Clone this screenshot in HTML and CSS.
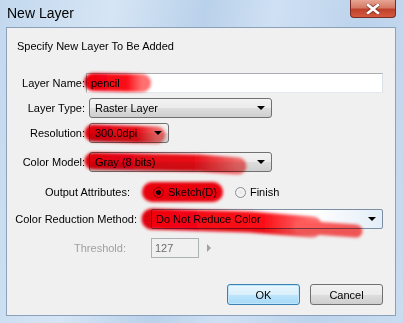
FILE: index.html
```html
<!DOCTYPE html>
<html lang="en">
<head>
    <meta charset="UTF-8">
    <title>New Layer</title>
    <link rel="stylesheet" href="styles.css">
</head>
<body>
    <div class="window">
        <div class="titlebar">
            <span class="title">New Layer</span>
            <button class="close" type="button">
                <svg width="14" height="10" viewBox="0 0 14 10"><path d="M2 1 L12 9 M12 1 L2 9" stroke="#5a1a14" stroke-width="4.5" stroke-linecap="square" opacity="0.5"/><path d="M2 1 L12 9 M12 1 L2 9" stroke="#fff" stroke-width="2.6" stroke-linecap="square"/></svg>
            </button>
        </div>
        <div class="client">
            <p class="intro">Specify New Layer To Be Added</p>

            <div class="row row-name">
                <label class="lbl lbl-short">Layer Name:</label>
                <input class="text" type="text" value="pencil">
            </div>
            <div class="row row-type">
                <label class="lbl lbl-short">Layer Type:</label>
                <div class="combo combo-wide">Raster Layer<span class="arrow"></span></div>
            </div>
            <div class="row row-res">
                <label class="lbl lbl-short">Resolution:</label>
                <div class="combo combo-small">300.0dpi<span class="arrow"></span></div>
            </div>
            <div class="row row-model">
                <label class="lbl lbl-short">Color Model:</label>
                <div class="combo combo-wide">Gray (8 bits)<span class="arrow"></span></div>
            </div>
            <div class="row row-output">
                <label class="lbl lbl-output">Output Attributes:</label>
                <span class="radio checked"></span><span class="radio-text">Sketch(D)</span>
                <span class="radio"></span><span class="radio-text">Finish</span>
            </div>
            <div class="row row-reduce">
                <label class="lbl lbl-long">Color Reduction Method:</label>
                <div class="combo combo-list">Do Not Reduce Color<span class="arrow"></span></div>
            </div>
            <div class="row row-thresh">
                <label class="lbl lbl-thresh disabled">Threshold:</label>
                <div class="spin">127</div>
                <span class="tri"></span>
            </div>

            <div class="actions">
                <button class="btn btn-default" type="button">OK</button>
                <button class="btn" type="button">Cancel</button>
            </div>
        </div>

        <!-- marker scribbles over the form -->
        <svg class="marks" width="403" height="323" viewBox="0 0 403 323">
            <defs>
                <filter id="soft" x="-20%" y="-50%" width="140%" height="200%">
                    <feGaussianBlur stdDeviation="1.6"/>
                </filter>
                <linearGradient id="fadeR" x1="0" y1="0" x2="1" y2="0">
                    <stop offset="0" stop-color="#f00010"/>
                    <stop offset="0.7" stop-color="#fa1018"/>
                    <stop offset="1" stop-color="#ff7070"/>
                </linearGradient>
            </defs>
            <g filter="url(#soft)" stroke-linecap="round" fill="none">
                <path d="M93 82 L142 83" stroke="url(#fadeR)" stroke-width="18"/>
                <path d="M93 133 L157 135" stroke="url(#fadeR)" stroke-width="17"/>
                <path d="M93 161 L200 163 L238 166" stroke="url(#fadeR)" stroke-width="17"/>
                <path d="M152 192 L213 192" stroke="#f8040c" stroke-width="20"/>
                <path d="M152 219 L250 222 L312 227" stroke="url(#fadeR)" stroke-width="21"/>
                <path d="M300 227 L356 231" stroke="#ff5a5a" stroke-width="13"/>
            </g>
        </svg>
    </div>
</body>
</html>
```

FILE: styles.css
```css
body {
    margin: 0;
    padding: 0;
    font-family: "Liberation Sans", Arial, sans-serif;
    font-size: 11px;
    color: #000;
}
.window {
    position: relative;
    width: 403px;
    height: 323px;
    box-sizing: border-box;
    padding: 0 7px 7px 6px;
    background: linear-gradient(100deg, #c3d8ee 0%, #d6e5f5 25%, #b9d1ea 45%, #cfe0f3 60%, #bcd3ec 80%, #c9dcf0 100%);
    display: flex;
    flex-direction: column;
}
.titlebar {
    height: 27px;
    display: flex;
    align-items: flex-start;
    justify-content: space-between;
}
.title {
    margin-top: 5px;
    margin-left: 1px;
    font-size: 14px;
    color: #000;
}
.close {
    width: 46px;
    height: 18px;
    margin-right: 0;
    padding: 0;
    border: 1px solid #7a2a23;
    border-top: none;
    border-radius: 0 0 4px 4px;
    background: linear-gradient(#e8a493 0%, #d47a66 45%, #c0412b 55%, #d25a3f 100%);
    display: flex;
    align-items: center;
    justify-content: center;
}
.client {
    flex: 1;
    position: relative;
    background: #f0f0f0;
    border: 1px solid #8ba1b9;
    padding: 0 12px 0 0;
}
.intro {
    margin: 11px 0 0 10px;
    line-height: 14px;
}
.row {
    display: flex;
    align-items: center;
    height: 20px;
}
.row-name { margin-top: 20px; }
.row-type { margin-top: 5px; }
.row-res { margin-top: 5px; }
.row-model { margin-top: 9px; }
.row-output { margin-top: 10px; }
.row-reduce { margin-top: 7px; }
.row-thresh { margin-top: 9px; }

.lbl {
    text-align: right;
    flex-shrink: 0;
    white-space: nowrap;
}
.lbl-short {
    width: 78px;
    margin-right: 4px;
}
.lbl-output {
    width: 123px;
    margin-right: 23px;
}
.lbl-long {
    width: 130px;
    margin-right: 14px;
}
.lbl-thresh {
    width: 119px;
    margin-right: 25px;
}
.disabled {
    color: #a0a0a0;
}
.text {
    flex: 1;
    height: 20px;
    box-sizing: border-box;
    margin-left: -3px;
    border: 1px solid #abadb3;
    border-bottom-color: #e3e9ef;
    border-right-color: #dbdfe6;
    background: #fff;
    padding: 0 4px;
    font: inherit;
    outline: none;
}
.combo {
    position: relative;
    height: 20px;
    box-sizing: border-box;
    border: 1px solid #707070;
    border-radius: 3px;
    background: linear-gradient(#f2f2f2 0%, #ebebeb 50%, #dddddd 51%, #cfcfcf 100%);
    padding: 0 0 0 5px;
    line-height: 18px;
}
.combo-wide { width: 183px; }
.combo-small { width: 80px; }
.combo-list {
    flex: 1;
    border-radius: 2px;
    border-color: #7d8fa3;
    background: linear-gradient(90deg, #ffffff 0%, #ffffff 70%, #e3eef8 100%);
    padding-left: 4px;
}
.arrow {
    position: absolute;
    right: 6px;
    top: 7px;
    width: 0;
    height: 0;
    border-left: 4px solid transparent;
    border-right: 4px solid transparent;
    border-top: 4px solid #000;
}
.radio {
    width: 11px;
    height: 11px;
    flex-shrink: 0;
    box-sizing: border-box;
    border-radius: 50%;
    border: 1px solid #8e8f8f;
    background: radial-gradient(circle, #e6e6e6 0%, #f6f6f6 60%, #d0d0d0 100%);
    margin-right: 4px;
}
.radio.checked {
    background: radial-gradient(circle, #111 0%, #222 35%, #f4f4f4 45%, #ddd 100%);
}
.radio-text {
    margin-right: 18px;
}
.spin {
    width: 48px;
    height: 20px;
    box-sizing: border-box;
    border: 1px solid #adb2b5;
    color: #6d6d6d;
    padding-left: 3px;
    line-height: 18px;
}
.tri {
    margin-left: 8px;
    width: 0;
    height: 0;
    border-top: 4px solid transparent;
    border-bottom: 4px solid transparent;
    border-left: 4px solid #a0a0a0;
}
.actions {
    display: flex;
    justify-content: flex-end;
    gap: 10px;
    margin-top: 26px;
}
.btn {
    width: 73px;
    height: 21px;
    box-sizing: border-box;
    border: 1px solid #707070;
    border-radius: 3px;
    background: linear-gradient(#f2f2f2 0%, #ebebeb 50%, #dddddd 51%, #cfcfcf 100%);
    font: inherit;
    padding: 0;
}
.btn-default {
    border-color: #3c7fb1;
    background: linear-gradient(#eaf6fd 0%, #d9f0fc 50%, #bee6fd 51%, #a7d9f5 100%);
    box-shadow: inset 0 0 0 1px #c0e6fb;
}
.marks {
    position: absolute;
    left: 0;
    top: 0;
    pointer-events: none;
    mix-blend-mode: multiply;
}
```
